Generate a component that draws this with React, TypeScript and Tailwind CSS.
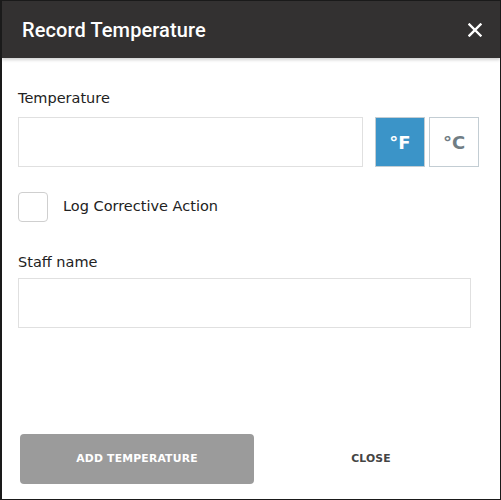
import React, { useState } from "react";

const body = { fontFamily: '"DejaVu Sans", "Open Sans", sans-serif' };

function App() {
  const [unit, setUnit] = useState<"F" | "C">("F");
  const [checked, setChecked] = useState(false);

  return (
    <div className="w-[501px] h-[500px] bg-white border border-l-2 border-[#1a1a1a] flex flex-col overflow-hidden" style={body}>
      <header className="h-[57px] shrink-0 bg-[#333131] flex items-center justify-between pl-[20px] pr-[18px] shadow-[0_2px_3px_rgba(0,0,0,0.18)] relative z-10">
        <h2 className="text-white text-[20px] font-medium tracking-[0.1px]" style={{ fontFamily: "Roboto, sans-serif" }}>
          Record Temperature
        </h2>
        <button type="button" className="text-white">
          <svg width="14" height="14" viewBox="0 0 14 14">
            <path d="M1.5 1.5 L12.5 12.5 M12.5 1.5 L1.5 12.5" stroke="currentColor" strokeWidth="2.4" strokeLinecap="square" />
          </svg>
        </button>
      </header>

      <div className="flex-1 flex flex-col pl-[16px] pr-[20px]">
        <label className="mt-[30px] text-[14.5px] text-[#222] leading-[20px]">Temperature</label>
        <div className="mt-[9px] flex items-stretch h-[50px]">
          <input className="w-[345px] border border-[#e0e0e0] outline-none px-3" />
          <button
            type="button"
            onClick={() => setUnit("F")}
            className={
              unit === "F"
                ? "ml-[12px] w-[50px] border border-[#c3cdd3] bg-[#3b94c8] text-white text-[18px] font-bold"
                : "ml-[12px] w-[50px] border border-[#c3cdd3] bg-white text-[#707d84] text-[18px] font-bold"
            }
          >
            °F
          </button>
          <button
            type="button"
            onClick={() => setUnit("C")}
            className={
              unit === "C"
                ? "ml-[4px] w-[50px] border border-[#c3cdd3] bg-[#3b94c8] text-white text-[18px] font-bold"
                : "ml-[4px] w-[50px] border border-[#c3cdd3] bg-white text-[#707d84] text-[18px] font-bold"
            }
          >
            °C
          </button>
        </div>

        <div className="mt-[25px] flex items-center">
          <button
            type="button"
            onClick={() => setChecked(!checked)}
            className="w-[30px] h-[30px] rounded-[4px] border border-[#cfcfcf] bg-white flex items-center justify-center text-[#3b94c8]"
          >
            {checked && (
              <svg width="16" height="16" viewBox="0 0 16 16">
                <path d="M3 8.5 L6.5 12 L13 4.5" fill="none" stroke="currentColor" strokeWidth="2.2" />
              </svg>
            )}
          </button>
          <span className="ml-[15px] text-[14.5px] text-[#222]">Log Corrective Action</span>
        </div>

        <label className="mt-[30px] text-[14.5px] text-[#222] leading-[20px]">Staff name</label>
        <input className="mt-[6px] h-[50px] w-[453px] border border-[#e0e0e0] outline-none px-3" />

        <div className="mt-auto mb-[15px] flex items-center">
          <button
            type="button"
            className="ml-[2px] w-[234px] h-[50px] rounded-[4px] bg-[#9b9b9b] text-white text-[10.8px] font-bold tracking-[0.2px]"
          >
            ADD TEMPERATURE
          </button>
          <button type="button" className="ml-[8px] flex-1 h-[50px] text-[#444] text-[10.8px] font-bold tracking-[0.2px]">
            CLOSE
          </button>
        </div>
      </div>
    </div>
  );
}

export default App;
